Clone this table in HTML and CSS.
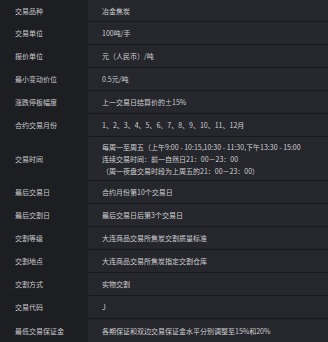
FILE: index.html
```html
<!DOCTYPE html>
<html lang="zh-CN">
<head>
<meta charset="utf-8">
<link rel="stylesheet" href="styles.css">
</head>
<body>
<div class="spec">
  <div class="row first"><div class="key">交易品种</div><div class="val">冶金焦炭</div></div>
  <div class="row"><div class="key">交易单位</div><div class="val">100吨/手</div></div>
  <div class="row"><div class="key">报价单位</div><div class="val">元（人民币）/吨</div></div>
  <div class="row"><div class="key">最小变动价位</div><div class="val">0.5元/吨</div></div>
  <div class="row"><div class="key">涨跌停板幅度</div><div class="val">上一交易日结算价的±15%</div></div>
  <div class="row"><div class="key">合约交易月份</div><div class="val">1、2、3、4、5、6、7、8、9、10、11、12月</div></div>
  <div class="row tall"><div class="key">交易时间</div><div class="val">每周一至周五（上午9:00 - 10:15,10:30 - 11:30,下午13:30 - 15:00<br>连续交易时间：前一自然日21：00－23：00<br>（周一夜盘交易时段为上周五的21：00－23：00）</div></div>
  <div class="row"><div class="key">最后交易日</div><div class="val">合约月份第10个交易日</div></div>
  <div class="row"><div class="key">最后交割日</div><div class="val">最后交易日后第3个交易日</div></div>
  <div class="row"><div class="key">交割等级</div><div class="val">大连商品交易所焦炭交割质量标准</div></div>
  <div class="row"><div class="key">交割地点</div><div class="val">大连商品交易所焦炭指定交割仓库</div></div>
  <div class="row"><div class="key">交割方式</div><div class="val">实物交割</div></div>
  <div class="row"><div class="key">交易代码</div><div class="val">J</div></div>
  <div class="row last"><div class="key">最低交易保证金</div><div class="val">各期保证和双边交易保证金水平分别调整至15%和20%</div></div>
</div>
</body>
</html>
```

FILE: styles.css
```css
html, body {
  margin: 0;
  padding: 0;
  background: #1d1e22;
}
body {
  width: 328px;
  height: 342px;
  overflow: hidden;
  font-family: "Noto Sans CJK SC", "Noto Sans", sans-serif;
  font-size: 7px;
  color: #cfcfd2;
}
.spec {
  display: flex;
  flex-direction: column;
}
.row {
  display: grid;
  grid-template-columns: 88px 1fr;
  height: 23px;
}
.row.first { height: 22px; }
.row.tall { height: 44px; }
.key, .val {
  display: flex;
  align-items: center;
  box-sizing: border-box;
  line-height: 12px;
}
.key {
  padding-left: 15px;
  background: #1d1e22;
  border-bottom: 1px solid #1b1c20;
  color: #c9c9cc;
}
.val {
  padding-left: 14px;
  background: #26272c;
  border-bottom: 1px solid #18191c;
  white-space: nowrap;
}
.last .val, .last .key { border-bottom: none; }
```
